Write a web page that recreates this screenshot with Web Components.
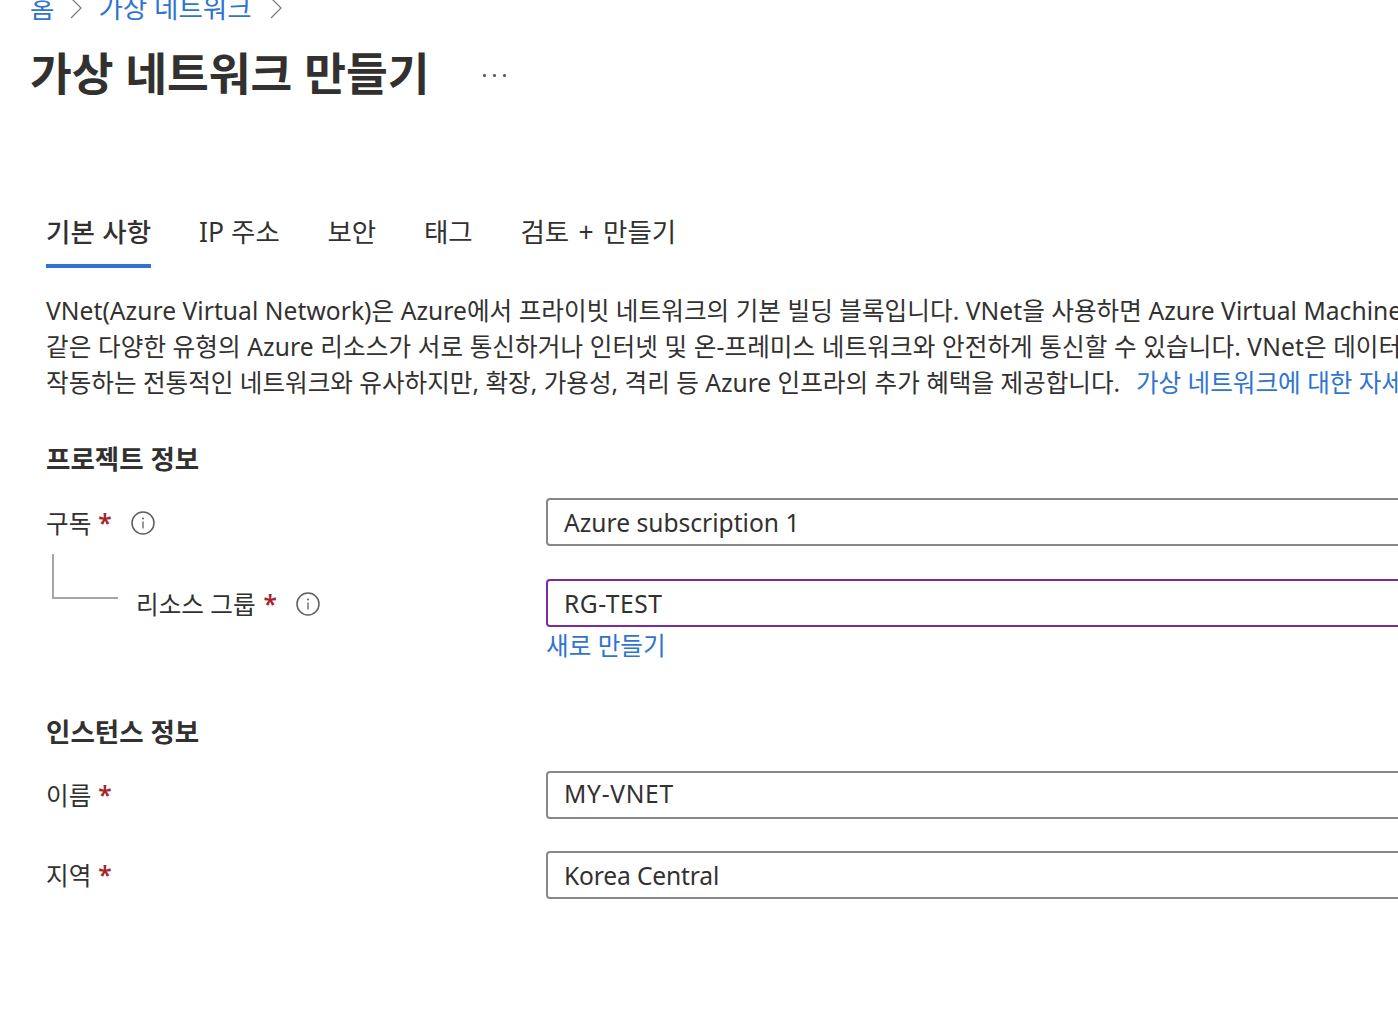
<!DOCTYPE html>
<html lang="ko"><head><meta charset="utf-8"><style>
html,body{margin:0;padding:0;background:#fff;height:100%;overflow:hidden}
body{font-family:"Noto Sans","Noto Sans CJK KR",sans-serif;color:#323130}
a{color:#2f74d0;text-decoration:none;margin-left:3px}
</style></head><body>
<az-page>
  <az-breadcrumb></az-breadcrumb>
  <az-title>가상 네트워크 만들기</az-title>
  <az-tabs>
    <az-tab active>기본 사항</az-tab><az-tab>IP 주소</az-tab><az-tab>보안</az-tab><az-tab>태그</az-tab><az-tab style="word-spacing:2.5px">검토 + 만들기</az-tab>
  </az-tabs>
  <az-intro>
    <div style="letter-spacing:.05px">VNet(Azure Virtual Network)은 Azure에서 프라이빗 네트워크의 기본 빌딩 블록입니다. VNet을 사용하면 Azure Virtual Machine</div>
    <div style="letter-spacing:.1px">같은 다양한 유형의 Azure 리소스가 서로 통신하거나 인터넷 및 온-프레미스 네트워크와 안전하게 통신할 수 있습니다. VNet은 데이터</div>
    <div style="margin-top:1px">작동하는 전통적인 네트워크와 유사하지만, 확장, 가용성, 격리 등 Azure 인프라의 추가 혜택을 제공합니다. &nbsp;<a>가상 네트워크에 대한 자세히 알아보기</a></div>
  </az-intro>
  <az-section style="margin-top:40px">프로젝트 정보</az-section>
  <az-field style="margin-top:21px;--ilh:46px" label="구독" info value="Azure subscription 1"></az-field>
  <az-field style="margin-top:33px;--ilh:46px;--vs:.55px;--sm:8px;--im:1px" label="리소스 그룹" info nested focused value="RG-TEST"></az-field>
  <az-newlink>새로 만들기</az-newlink>
  <az-section style="margin-top:49px">인스턴스 정보</az-section>
  <az-field style="margin-top:21px;--ilh:42px;--lp:2px;--vs:.7px" label="이름" value="MY-VNET"></az-field>
  <az-field style="margin-top:32px;--ilh:46px;--lp:2px;--vs:-.15px" label="지역" value="Korea Central"></az-field>
</az-page>
<script>
const INFO = '<svg width="26" height="26" viewBox="0 0 26 26" fill="none"><circle cx="13" cy="13" r="11" stroke="#605e5c" stroke-width="1.5"/><path d="M13 11.5v7" stroke="#605e5c" stroke-width="1.3"/><circle cx="13" cy="8.4" r="1" fill="#605e5c"/></svg>';
const CHEV = '<svg width="12" height="22" viewBox="0 0 12 22" fill="none"><path d="M1 1l10 10L1 21" stroke="#7a7876" stroke-width="1.2"/></svg>';

function simple(name, html) {
  customElements.define(name, class extends HTMLElement {
    constructor() {
      super();
      this.attachShadow({ mode: 'open' }).innerHTML = html;
    }
  });
}

simple('az-page', `<style>:host{display:block;overflow:hidden;height:1028px}</style><slot></slot>`);

simple('az-breadcrumb', `<style>
:host{display:flex;align-items:center;height:32px;margin-top:-8px;padding-left:30px;font-size:26.5px;color:#2f74d0;white-space:nowrap}
svg{display:block;margin:0 16px;flex:none}
svg:last-child{margin-left:18px}
span{line-height:32px}
</style><span>홈</span>${CHEV}<span>가상 네트워크</span>${CHEV}`);

simple('az-title', `<style>
:host{display:flex;align-items:center;height:64px;margin-top:17px;padding-left:30px;white-space:nowrap}
h1{margin:0;font-size:45.4px;font-weight:600;line-height:64px;color:#323130}
.more{margin-left:54px;display:flex;gap:7.5px;margin-top:5px}
i{display:block;width:2.5px;height:2.5px;background:#605e5c;border-radius:50%}
</style><h1><slot></slot></h1><div class="more"><i></i><i></i><i></i></div>`);

simple('az-tabs', `<style>
:host{display:flex;gap:47.7px;margin-top:105px;padding-left:46px;white-space:nowrap;font-size:26.5px}
</style><slot></slot>`);

simple('az-tab', `<style>
:host{display:block;height:58px;line-height:44px;box-sizing:border-box}
:host([active]){font-weight:500;letter-spacing:.2px;border-bottom:4px solid #2f74d0}
</style><slot></slot>`);

simple('az-intro', `<style>
:host{display:block;margin-top:25px;padding-left:46px;font-size:24.6px;line-height:35.7px;white-space:nowrap;overflow:hidden}
</style><slot></slot>`);

simple('az-section', `<style>
:host{display:block;padding-left:46px;font-size:26.5px;font-weight:600;line-height:36px;color:#323130}
</style><slot></slot>`);

simple('az-newlink', `<style>
:host{display:block;padding-left:546px;font-size:24.6px;line-height:38px;color:#2f74d0}
</style><slot></slot>`);

customElements.define('az-field', class extends HTMLElement {
  constructor() {
    super();
    const nested = this.hasAttribute('nested');
    const info = this.hasAttribute('info');
    const label = this.getAttribute('label');
    const value = this.getAttribute('value');
    this.attachShadow({ mode: 'open' }).innerHTML = `<style>
:host{display:flex;height:48px;font-size:24.6px;white-space:nowrap}
.left{flex:none;width:546px;box-sizing:border-box;padding:0 0 var(--lp,0) 46px;display:flex;align-items:center}
.tree{flex:none;width:66px;height:45px;margin:-54px 18px 0 6px;box-sizing:border-box;border-left:2px solid #a8a6a4;border-bottom:2px solid #a8a6a4}
.star{color:#a4262c;margin-left:var(--sm,7px);font-weight:600}
svg{margin:var(--im,2px) 0 0 18px;display:block;flex:none}
.input{flex:none;width:1000px;height:48px;box-sizing:border-box;border:2px solid #8a8886;border-radius:4px;padding-left:16px;line-height:var(--ilh,44px);letter-spacing:var(--vs,0)}
:host([focused]) .input{border-color:#7a2da0}
</style>
<div class="left">${nested ? '<div class="tree"></div>' : ''}<span>${label}</span><span class="star">*</span>${info ? INFO : ''}</div>
<div class="input">${value}</div>`;
  }
});
</script>
</body></html>
